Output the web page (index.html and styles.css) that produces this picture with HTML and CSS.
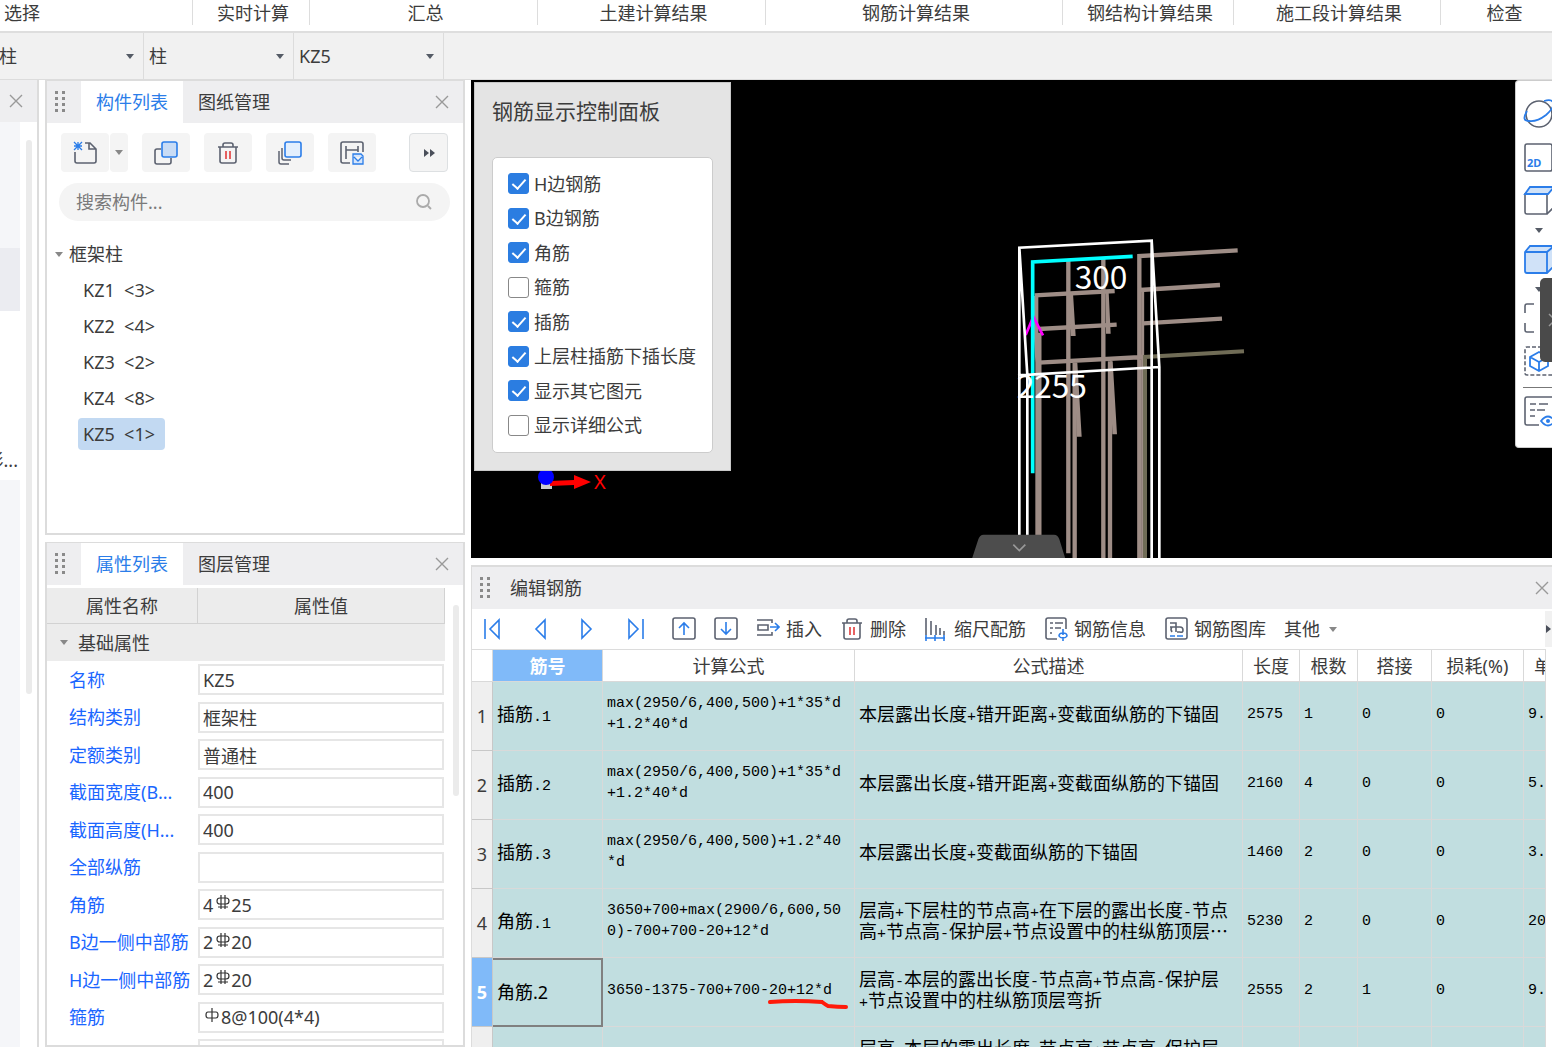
FILE: index.html
```
<!DOCTYPE html>
<html lang="zh-CN">
<head>
<meta charset="utf-8">
<meta name="viewport" content="width=device-width, initial-scale=1">
<title>编辑钢筋</title>
<link rel="stylesheet" href="styles.css">
</head>
<body>

<!-- shared icons -->
<svg class="defs" width="0" height="0">
  <symbol id="close" viewBox="0 0 14 14"><path d="M1 1l12 12M13 1L1 13" fill="none" stroke="#999" stroke-width="1.4"/></symbol>
  <symbol id="grip" viewBox="0 0 10 22"><path d="M0 0h3v3H0zM7 0h3v3H7zM0 6h3v3H0zM7 6h3v3H7zM0 12h3v3H0zM7 12h3v3H7zM0 18h3v3H0zM7 18h3v3H7z" fill="#8a8a8a"/></symbol>
  <symbol id="caret" viewBox="0 0 8 5"><path d="M0 0h8L4 5z" fill="currentColor"/></symbol>
  <symbol id="trash" viewBox="0 0 24 24"><path d="M2 6h20M4 6v14q0 2 2 2h12q2 0 2-2V6M7 6V4q0-2 2-2h6q2 0 2 2v2" fill="none" stroke="#5c6270" stroke-width="1.6"/><path d="M10 10v8M14 10v8" stroke="#e23b3b" stroke-width="1.6"/></symbol>
  <symbol id="hrb" viewBox="0 0 14 14"><path d="M5 0v14M9 0v14M2 12h10M4 3h6q3 0 3 3t-3 3H4q-3 0-3-3t3-3z" fill="none" stroke="#333" stroke-width="1.2"/></symbol>
  <symbol id="hpb" viewBox="0 0 14 14"><path d="M7 0v14M3 4h8q2 0 2 3t-2 3H3q-2 0-2-3t2-3z" fill="none" stroke="#333" stroke-width="1.2"/></symbol>
</svg>

<div class="app">
  <nav class="ribbon">
    <span class="first">选择</span>
    <span>实时计算</span>
    <span>汇总</span>
    <span>土建计算结果</span>
    <span>钢筋计算结果</span>
    <span>钢结构计算结果</span>
    <span>施工段计算结果</span>
    <span>检查</span>
  </nav>

  <div class="filters">
    <div class="pick"><select aria-label="分类"><option>柱</option></select><svg class="caret"><use href="#caret"/></svg></div>
    <div class="pick"><select aria-label="类型"><option>柱</option></select><svg class="caret"><use href="#caret"/></svg></div>
    <div class="pick"><select aria-label="构件"><option>KZ5</option></select><svg class="caret"><use href="#caret"/></svg></div>
  </div>

  <div class="work">
    <aside class="strip">
      <div class="dock-head"><button class="x" aria-label="关闭"><svg><use href="#close"/></svg></button></div>
      <div class="strip-body">
        <div class="strip-list">
          <div class="s1"></div>
          <div class="s2"></div>
          <div class="s3"><span>形...</span></div>
          <div class="s4"></div>
        </div>
        <div class="scroll strip-scroll"></div>
      </div>
    </aside>

    <div class="left">
      <section class="dock parts">
        <div class="dock-head">
          <svg class="grip"><use href="#grip"/></svg>
          <button class="tab on">构件列表</button>
          <button class="tab">图纸管理</button>
          <button class="x" aria-label="关闭"><svg><use href="#close"/></svg></button>
        </div>
        <div class="tools">
          <div class="split">
            <button class="tool" aria-label="新建"><svg viewBox="0 0 24 24"><path d="M2 11v9q0 2 2 2h17q2 0 2-2V8l-6-6h-5M16 2v6h7" fill="none" stroke="#5c6270" stroke-width="1.6"/><path d="M5 1v8M1 5h8M1 1l8 8M9 1L1 9" stroke="#2b7de9" stroke-width="1.3"/></svg></button>
            <button class="drop" aria-label="更多新建"><svg class="caret"><use href="#caret"/></svg></button>
          </div>
          <button class="tool" aria-label="复制"><svg viewBox="0 0 24 24"><path d="M7 8H3Q1 8 1 10v11q0 2 2 2h12q2 0 2-2v-4" fill="none" stroke="#5c6270" stroke-width="1.6"/><rect x="8" y="1" width="15" height="15" rx="2" fill="#c9dcf5" stroke="#2b7de9" stroke-width="1.6"/></svg></button>
          <button class="tool" aria-label="删除"><svg><use href="#trash"/></svg></button>
          <button class="tool" aria-label="层间复制"><svg viewBox="0 0 24 24"><path d="M4 7v10q0 2 2 2h7M1 10v11q0 2 2 2h8" fill="none" stroke="#5c6270" stroke-width="1.5"/><rect x="7" y="1" width="16" height="15" rx="2" fill="#e3effd" stroke="#2b7de9" stroke-width="1.6"/></svg></button>
          <button class="tool" aria-label="存档"><svg viewBox="0 0 24 24"><path d="M10 22H3q-2 0-2-2V3q0-2 2-2h18q2 0 2 2v8M6 5v13M6 9h12M18 5v6" fill="none" stroke="#5c6270" stroke-width="1.6"/><path d="M13 13h8l2 2v8H13zM14 16l4 4 4-4" fill="#d5e5fb" stroke="#2b7de9" stroke-width="1.3"/></svg></button>
          <button class="more" aria-label="更多"><svg viewBox="0 0 12 8"><path d="M1 0l5 4-5 4zM7 0l5 4-5 4z" fill="#4a4f5a"/></svg></button>
        </div>
        <div class="search">
          <input type="text" aria-label="搜索构件" placeholder="搜索构件...">
          <svg viewBox="0 0 16 16"><path d="M12 12l3 3M13 7A6 6 0 1 1 1 7a6 6 0 0 1 12 0z" fill="none" stroke="#aaa" stroke-width="1.8"/></svg>
        </div>
        <div class="tree">
          <div class="root"><svg class="caret"><use href="#caret"/></svg>框架柱</div>
          <ul>
            <li><span>KZ1  &lt;3&gt;</span></li>
            <li><span>KZ2  &lt;4&gt;</span></li>
            <li><span>KZ3  &lt;2&gt;</span></li>
            <li><span>KZ4  &lt;8&gt;</span></li>
            <li><span class="sel">KZ5  &lt;1&gt;</span></li>
          </ul>
        </div>
      </section>

      <section class="dock props">
        <div class="dock-head">
          <svg class="grip"><use href="#grip"/></svg>
          <button class="tab on">属性列表</button>
          <button class="tab">图层管理</button>
          <button class="x" aria-label="关闭"><svg><use href="#close"/></svg></button>
        </div>
        <div class="props-body">
          <div class="sheet">
            <div class="sheet-head"><span>属性名称</span><span>属性值</span></div>
            <div class="group"><svg class="caret"><use href="#caret"/></svg>基础属性</div>
            <div class="prop"><label for="p1">名称</label><div class="val"><input type="text" id="p1" value="KZ5"></div></div>
            <div class="prop"><label for="p2">结构类别</label><div class="val"><input type="text" id="p2" value="框架柱"></div></div>
            <div class="prop"><label for="p3">定额类别</label><div class="val"><input type="text" id="p3" value="普通柱"></div></div>
            <div class="prop"><label for="p4">截面宽度(B...</label><div class="val"><input type="text" id="p4" value="400"></div></div>
            <div class="prop"><label for="p5">截面高度(H...</label><div class="val"><input type="text" id="p5" value="400"></div></div>
            <div class="prop"><label for="p6">全部纵筋</label><div class="val"><input type="text" id="p6" value=""></div></div>
            <div class="prop"><label for="p7">角筋</label><div class="val"><input type="text" id="p7" value="4&emsp;25"><svg class="sym"><use href="#hrb"/></svg></div></div>
            <div class="prop"><label for="p8">B边一侧中部筋</label><div class="val"><input type="text" id="p8" value="2&emsp;20"><svg class="sym"><use href="#hrb"/></svg></div></div>
            <div class="prop"><label for="p9">H边一侧中部筋</label><div class="val"><input type="text" id="p9" value="2&emsp;20"><svg class="sym"><use href="#hrb"/></svg></div></div>
            <div class="prop"><label for="p10">箍筋</label><div class="val"><input type="text" id="p10" value="&emsp;8@100(4*4)"><svg class="sym lead"><use href="#hpb"/></svg></div></div>
            <div class="prop"><label for="p11">节点区箍筋</label><div class="val"><input type="text" id="p11" value=""></div></div>
          </div>
          <div class="scroll props-scroll"></div>
        </div>
      </section>
    </div>

    <main class="main">
      <section class="view">
        <!-- column model with rebars -->
        <svg class="model" viewBox="0 0 960 1014">
          <g fill="none" stroke="#9e8d86">
            <path d="M325 120V1000" stroke-width="13"/>
            <path d="M344 428V1014M430 115V1014M450 424V1014" stroke-width="13"/>
            <path d="M228 228v110l5 90v586" stroke-width="14"/>
            <path d="M239 338V1014" stroke-width="11"/>
            <path d="M538 1014V108L833 91M224 226L464 213M236 327L470 314M236 428L550 411M540 210L780 195M550 310L786 296" stroke-width="13"/>
            <path d="M548 210V1014" stroke-width="9"/>
          </g>
          <path d="M325 220h14l8 128h-15zM436 215h10l6 126h-14zM344 428h8l13 222h-15zM450 424h8l13 219h-14z" fill="#9e8d86"/>
          <path d="M555 1014V411L852 394" fill="none" stroke="#706c56" stroke-width="12"/>
          <path d="M218 760V126L518 109" fill="none" stroke="#00ffff" stroke-width="11"/>
          <path d="M197 345L220 290L249 346" fill="none" stroke="#f0f" stroke-width="8"/>
          <path d="M218 270V420" stroke="#00ffff" stroke-width="9"/>
          <path d="M178 1014V83L575 62V1014M178 83L202 465V1014M575 62L598 441V1014M174 466L598 441" fill="none" stroke="#fff" stroke-width="8"/>
          <text x="344" y="206" font-size="95">300</text>
          <text x="170" y="534" font-size="95">2255</text>
          <path d="M36 1016L55 958q4-14 16-14H282q12 0 16 14L316 1016z" fill="#4d4d4d"/>
          <path d="M160 974L178 992L196 974" fill="none" stroke="#999" stroke-width="5"/>
        </svg>

        <svg class="axis" viewBox="0 0 80 24">
          <path d="M3 12h11v7H3z" fill="#ccc"/>
          <path d="M12 11l24-1V5l17 7-17 7v-4l-24 1z" fill="#f00"/>
          <circle cx="8" cy="7" r="8" fill="#00f"/>
          <text x="56" y="19" font-size="20">X</text>
        </svg>

        <form class="control">
          <h2>钢筋显示控制面板</h2>
          <div class="checks">
            <label><input type="checkbox" checked>H边钢筋</label>
            <label><input type="checkbox" checked>B边钢筋</label>
            <label><input type="checkbox" checked>角筋</label>
            <label><input type="checkbox">箍筋</label>
            <label><input type="checkbox" checked>插筋</label>
            <label><input type="checkbox" checked>上层柱插筋下插长度</label>
            <label><input type="checkbox" checked>显示其它图元</label>
            <label><input type="checkbox">显示详细公式</label>
          </div>
        </form>

        <div class="viewbar">
          <button aria-label="动态观察"><svg viewBox="0 0 30 30"><circle cx="16" cy="15" r="13" fill="#fff" stroke="#5c6270" stroke-width="1.6"/><path d="M4 12q-6 10 2 10 8 1 17-6 9-8 7-13-2-3-9-1" fill="none" stroke="#2b7de9" stroke-width="1.8"/></svg></button>
          <button aria-label="二维"><svg viewBox="0 0 30 30"><rect x="2" y="2" width="27" height="27" rx="2" fill="#fff" stroke="#5c6270" stroke-width="1.6"/><text x="4" y="25" font-size="11">2D</text></svg></button>
          <button aria-label="俯视"><svg viewBox="0 0 30 30"><path d="M2 9h22v20H4q-2 0-2-2zM24 9l7-7M24 29l7-7" fill="#fff" stroke="#5c6270" stroke-width="1.6"/><path d="M2 9l5-7h24l-6 7z" fill="#d0e2f8" stroke="#2b7de9" stroke-width="1.8"/></svg></button>
          <svg class="caret"><use href="#caret"/></svg>
          <button aria-label="实体"><svg viewBox="0 0 30 30"><path d="M2 8l5-6h24v20l-7 7H4q-2 0-2-2z" fill="#d0e2f8" stroke="#2b7de9" stroke-width="1.8"/><path d="M2 8h22v21M24 8l7-6" fill="none" stroke="#2b7de9" stroke-width="1.8"/></svg></button>
          <svg class="caret"><use href="#caret"/></svg>
          <button aria-label="全屏"><svg viewBox="0 0 30 30"><path d="M11 1H4Q2 1 2 3v7M2 20v7q0 2 2 2h7" fill="none" stroke="#5c6270" stroke-width="1.6"/></svg></button>
          <button class="iso" aria-label="局部三维"><svg viewBox="0 0 30 30"><path d="M31 1H4Q2 1 2 3v24q0 2 2 2h27" fill="none" stroke="#5c6270" stroke-width="1.6" stroke-dasharray="4 2"/><path d="M16 6l9 5v9l-9 5-9-5v-9zM7 11l9 5 9-5M16 16v9" fill="none" stroke="#2b7de9" stroke-width="1.8"/></svg></button>
          <button class="last" aria-label="显示设置"><svg viewBox="0 0 30 30"><path d="M31 1H4Q2 1 2 3v24q0 2 2 2h12M7 8h6M16 8h9M7 14h5M14 14h8M7 20h5" fill="none" stroke="#5c6270" stroke-width="1.6"/><path d="M18 25q7-9 14 0-7 9-14 0z" fill="#fff" stroke="#2b7de9" stroke-width="1.8"/><circle cx="25" cy="25" r="2" fill="#2b7de9"/></svg></button>
        </div>
        <button class="handle" aria-label="收起"><svg viewBox="0 0 12 16"><path d="M9 2l6 6-6 6" fill="none" stroke="#999" stroke-width="1.5"/></svg></button>
      </section>

      <section class="rebar">
        <div class="dock-head">
          <svg class="grip"><use href="#grip"/></svg>
          <h2>编辑钢筋</h2>
          <button class="x" aria-label="关闭"><svg><use href="#close"/></svg></button>
        </div>
        <div class="bar">
          <div class="nav">
            <button aria-label="首行"><svg viewBox="0 0 24 24"><path d="M5 2v20M19 3v18L10 12z" class="blue"/></svg></button>
            <button aria-label="上一行"><svg viewBox="0 0 24 24"><path d="M17 3v18L8 12z" class="blue"/></svg></button>
            <button aria-label="下一行"><svg viewBox="0 0 24 24"><path d="M6 3v18l9-9z" class="blue"/></svg></button>
            <button aria-label="末行"><svg viewBox="0 0 24 24"><path d="M19 2v20M5 3v18l9-9z" class="blue"/></svg></button>
          </div>
          <button aria-label="上移"><svg viewBox="0 0 24 24"><rect x="1" y="1" width="22" height="21" rx="2" class="gray"/><path d="M12 18V6M7 11l5-5 5 5" class="blue"/></svg></button>
          <button aria-label="下移"><svg viewBox="0 0 24 24"><rect x="1" y="1" width="22" height="21" rx="2" class="gray"/><path d="M12 5v12M7 12l5 5 5-5" class="blue"/></svg></button>
          <button><svg viewBox="0 0 24 24"><path d="M1 3h15v3M1 18h15v-3M2 8h10v5H2z" class="gray"/><path d="M14 10h9M19 6l4 4-4 4" class="blue"/></svg>插入</button>
          <button><svg><use href="#trash"/></svg>删除</button>
          <button><svg viewBox="0 0 24 24"><path d="M2 1v17M7 4v14M12 8v10M16 11v7M20 14v4" class="gray"/><path d="M1 21h20M2 18v6M11 18v6M20 18v6" class="blue"/></svg>缩尺配筋</button>
          <button><svg viewBox="0 0 24 24"><path d="M13 22H4q-2 0-2-2V3q0-2 2-2h16q2 0 2 2v9M6 6h3M11 6h8M6 11h3M11 11h6M6 16h2" class="gray"/><path d="M19 12v6M15 19q0-3 4-3t4 3q-1 2-4 2t-4-2zM19 20v4" class="blue"/></svg>钢筋信息</button>
          <button><svg viewBox="0 0 24 24"><rect x="2" y="1" width="21" height="21" rx="2" class="gray"/><path d="M6 6h6v9M6 10h10q3 0 3 3t-3 2h-3M12 10H8q-2 2 0 5" class="gray"/><path d="M6 19h5M13 19h6" class="blue"/></svg>钢筋图库</button>
          <button class="other">其他<svg class="caret"><use href="#caret"/></svg></button>
          <button class="overflow" aria-label="更多"><svg viewBox="0 0 6 10"><path d="M1 1l5 4-5 4z" fill="#4a4f5a"/></svg></button>
        </div>
        <div class="grid">
          <table>
            <colgroup><col class="c-no"><col class="c-id"><col class="c-calc"><col><col class="c-len"><col class="c-cnt"><col class="c-lap"><col class="c-loss"><col class="c-wt"></colgroup>
            <thead>
              <tr><th></th><th class="on">筋号</th><th>计算公式</th><th>公式描述</th><th>长度</th><th>根数</th><th>搭接</th><th>损耗(%)</th><th class="cut">单重</th></tr>
            </thead>
            <tbody>
              <tr><th>1</th><td>插筋<span class="m">.1</span></td><td class="m">max(2950/6,400,500)+1*35*d<br>+1.2*40*d</td><td>本层露出长度<span class="m">+</span>错开距离<span class="m">+</span>变截面纵筋的下锚固</td><td class="m">2575</td><td class="m">1</td><td class="m">0</td><td class="m">0</td><td class="m">9.</td></tr>
              <tr><th>2</th><td>插筋<span class="m">.2</span></td><td class="m">max(2950/6,400,500)+1*35*d<br>+1.2*40*d</td><td>本层露出长度<span class="m">+</span>错开距离<span class="m">+</span>变截面纵筋的下锚固</td><td class="m">2160</td><td class="m">4</td><td class="m">0</td><td class="m">0</td><td class="m">5.</td></tr>
              <tr><th>3</th><td>插筋<span class="m">.3</span></td><td class="m">max(2950/6,400,500)+1.2*40<br>*d</td><td>本层露出长度<span class="m">+</span>变截面纵筋的下锚固</td><td class="m">1460</td><td class="m">2</td><td class="m">0</td><td class="m">0</td><td class="m">3.</td></tr>
              <tr><th>4</th><td>角筋<span class="m">.1</span></td><td class="m">3650+700+max(2900/6,600,50<br>0)-700+700-20+12*d</td><td>层高<span class="m">+</span>下层柱的节点高<span class="m">+</span>在下层的露出长度<span class="m">-</span>节点<br>高<span class="m">+</span>节点高<span class="m">-</span>保护层<span class="m">+</span>节点设置中的柱纵筋顶层<span class="cjk">…</span></td><td class="m">5230</td><td class="m">2</td><td class="m">0</td><td class="m">0</td><td class="m">20</td></tr>
              <tr class="cur"><th>5</th><td class="edit">角筋.2</td><td class="m mark">3650-1375-700+700-20+12*d<svg viewBox="0 0 80 12"><path d="M2 4q25-2 52 0 4 3 6 4 10 1 18 1" fill="none" stroke="#ff1a0a" stroke-width="4" stroke-linecap="round"/></svg></td><td>层高<span class="m">-</span>本层的露出长度<span class="m">-</span>节点高<span class="m">+</span>节点高<span class="m">-</span>保护层<br><span class="m">+</span>节点设置中的柱纵筋顶层弯折</td><td class="m">2555</td><td class="m">2</td><td class="m">1</td><td class="m">0</td><td class="m">9.</td></tr>
              <tr><th></th><td></td><td></td><td>层高<span class="m">-</span>本层的露出长度<span class="m">-</span>节点高<span class="m">+</span>节点高<span class="m">-</span>保护层<br><span class="m">+</span>节点设置中的柱纵筋顶层弯折</td><td></td><td></td><td></td><td></td><td></td></tr>
            </tbody>
          </table>
        </div>
      </section>
    </main>
  </div>
</div>

</body>
</html>
```
FILE: styles.css
```
* {box-sizing: border-box;}

body {
  margin: 0;
  font-family: "Noto Sans", "Noto Sans CJK SC", sans-serif;
  font-size: 18px;
  line-height: 24px;
  color: #3c3c3c;
  background: #fff;
  overflow: hidden;
}

button, input, select {
  font: inherit;
  color: inherit;
}

button {
  border: 0;
  padding: 0;
  background: none;
  cursor: pointer;
}

h2 {
  margin: 0;
  font-size: 18px;
  font-weight: normal;
}

svg {display: block; flex: none;}
.defs {position: absolute;}
.caret {width: 8px; height: 5px; color: #555b66;}
.grip {width: 10px; height: 22px;}

.app {
  display: flex;
  flex-direction: column;
  height: 100vh;
}

/* ribbon */
.ribbon {
  display: grid;
  grid-template-columns: 193px 117px 228px 228px 297px 171px 207px minmax(124px, 1fr);
  height: 33px;
  flex: none;
  border-bottom: 2px solid #dedede;
}

.ribbon span {
  height: 25px;
  padding: 1px 0 0 4px;
  border-right: 1px solid #ddd;
  text-align: center;
}
.ribbon .first {text-align: left;}

/* filters */
.filters {
  display: flex;
  flex: none;
  height: 47px;
  margin-left: -6px;
  background: #f1f1f1;
  border-bottom: 1px solid #dcdcdc;
}

.pick {
  display: flex;
  align-items: center;
  width: 150px;
  padding-right: 9px;
  border-right: 1px solid #dcdcdc;
}

.pick select {
  flex: 1;
  height: 46px;
  padding: 0 0 0 5px;
  border: 0;
  background: none;
  appearance: none;
}

/* docks */
.work {
  display: flex;
  flex: 1;
  min-height: 0;
}

.dock-head {
  display: flex;
  align-items: center;
  flex: none;
  height: 42px;
  background: #eeeef0;
}

.dock-head .grip {margin: 0 16px 0 8px;}
.dock-head .x {margin-left: auto; padding: 4px 14px;}
.x svg {width: 14px; height: 14px;}

.tab {
  height: 42px;
  padding: 0 15px;
}
.tab.on {color: #2b7de9; background: #fff;}

.scroll {
  width: 6px;
  border-radius: 3px;
  background: #ebebeb;
}

/* cut off strip on the left */
.strip {
  display: flex;
  flex-direction: column;
  width: 39px;
  flex: none;
  border-right: 2px solid #dcdcdc;
}
.strip .dock-head .x {margin: 0; padding: 4px 9px;}
.strip-body {display: flex; flex: 1;}
.strip-list {
  display: flex;
  flex-direction: column;
  width: 20px;
}
.s1 {height: 126px; background: #f5f6f9;}
.s2 {height: 63px; background: #ebecf1;}
.s3 {
  display: flex;
  justify-content: flex-end;
  align-items: flex-end;
  height: 169px;
  padding: 0 2px 8px 0;
  overflow: hidden;
}
.s4 {flex: 1; background: #f5f6f9;}
.strip-scroll {height: 554px; margin: 18px 0 0 6px;}

.left {
  display: flex;
  flex-direction: column;
  gap: 7px;
  width: 420px;
  flex: none;
  margin-left: 6px;
}

.dock {
  border: 2px solid #dcdcdc;
  border-top-width: 1px;
}

.parts {height: 455px;}

.tools {
  display: flex;
  gap: 14px;
  padding: 10px 15px 0 14px;
}

.tool, .drop, .more {
  display: flex;
  align-items: center;
  justify-content: center;
  width: 48px;
  height: 39px;
  border-radius: 4px;
  background: #f4f4f4;
}
.tool svg {width: 24px; height: 24px;}
.split {display: flex; gap: 1px;}
.drop {width: 18px;}
.drop .caret {color: #888;}
.more {
  width: 39px;
  margin-left: auto;
  border: 1px solid #dde0e2;
}
.more svg {width: 12px; height: 8px;}

.search {
  display: flex;
  align-items: center;
  height: 38px;
  margin: 11px 13px 0 12px;
  padding: 0 18px 0 17px;
  border-radius: 19px;
  background: #f4f4f4;
}
.search input {
  flex: 1;
  min-width: 0;
  padding: 0;
  border: 0;
  background: none;
  outline: none;
}
.search input::placeholder {color: #7a7a7a; opacity: 1;}
.search svg {width: 16px; height: 16px;}

.tree {padding: 15px 8px 0;}
.root {
  display: flex;
  align-items: center;
  gap: 6px;
  height: 36px;
}
.root .caret {color: #888;}
.tree ul {
  list-style: none;
  margin: 0;
  padding: 0 0 0 23px;
}
.tree li {
  display: flex;
  align-items: center;
  height: 36px;
}
.tree li span {
  padding: 4px 10px 4px 5px;
  border-radius: 4px;
  white-space: pre;
}
.tree .sel {background: #c2d9f2;}

/* properties */
.props {
  flex: 1;
  min-height: 0;
  overflow: hidden;
}
.props-body {display: flex; padding-top: 3px;}
.sheet {width: 398px;}

.sheet-head {
  display: grid;
  grid-template-columns: 151px 1fr;
  height: 36px;
  background: #ececec;
  border-bottom: 1px solid #d2d2d2;
  line-height: 36px;
  text-align: center;
}
.sheet-head span {border-right: 1px solid #d2d2d2;}

.group {
  display: flex;
  align-items: center;
  gap: 10px;
  height: 37px;
  padding-left: 13px;
  background: #ececec;
}
.group .caret {color: #888;}

.prop {
  display: grid;
  grid-template-columns: 129px 246px;
  align-items: center;
  height: 37px;
  padding-left: 22px;
  color: #1a66ff;
  white-space: nowrap;
}
.prop:nth-child(even) {height: 38px;}
.val {position: relative; color: #3c3c3c;}
.val input {
  display: block;
  width: 100%;
  height: 31px;
  padding: 0 3px;
  border: 2px solid #e6e6e6;
  background: #fff;
}
.sym {
  position: absolute;
  left: 18px;
  top: 6px;
  width: 14px;
  height: 14px;
}
.sym.lead {left: 7px;}
.props-scroll {height: 191px; margin: 17px 0 0 8px;}

/* 3d view */
.main {
  display: flex;
  flex-direction: column;
  gap: 7px;
  flex: 1;
  min-width: 0;
  margin-left: 6px;
}

.view {
  position: relative;
  flex: none;
  height: 478px;
  background: #000;
  overflow: hidden;
}

.model {
  position: absolute;
  left: 489px;
  bottom: 0;
  width: 320px;
  height: 338px;
}
.model text {fill: #fff; font-family: "Noto Sans CJK SC", sans-serif;}

.axis {
  position: absolute;
  left: 67px;
  top: 390px;
  width: 80px;
  height: 24px;
}
.axis text {fill: #f00;}

.control {
  position: absolute;
  left: 3px;
  top: 2px;
  width: 257px;
  padding: 16px 17px 17px;
  background: #e4e4e4;
  border: 1px solid #c8c8c8;
}
.control h2 {
  margin-bottom: 34px;
  font-size: 21px;
}
.checks {
  padding: 8px 15px 10px;
  background: #fff;
  border: 1px solid #ccc;
  border-radius: 5px;
}
.checks label {
  display: flex;
  align-items: center;
  gap: 5px;
  height: 34px;
  white-space: nowrap;
}
.checks label:nth-child(odd) {height: 35px;}
.checks input {
  width: 21px;
  height: 21px;
  margin: 0;
  flex: none;
  appearance: none;
  border: 1px solid #888;
  border-radius: 3px;
  background: #fff;
}
.checks input:checked {
  border-color: #2b7de1;
  background: #2b7de1;
}
.checks input:checked::before {
  content: "";
  display: block;
  width: 6px;
  height: 11px;
  margin: 2px 6px;
  border: solid #fff;
  border-width: 0 2px 2px 0;
  transform: rotate(42deg);
}

.viewbar {
  position: absolute;
  top: 0;
  right: 0;
  width: 37px;
  height: 368px;
  padding: 18px 0 0 7px;
  overflow: hidden;
  background: #fff;
  border: solid #ccc;
  border-width: 1px 0 1px 1px;
  border-radius: 4px 0 0 4px;
}
.viewbar button {
  display: block;
  width: 30px;
  margin-bottom: 13px;
}
.viewbar button svg {width: 30px; height: 30px; overflow: visible;}
.viewbar .caret {margin: 0 0 11px 12px;}
.viewbar .iso {margin-bottom: 11px;}
.viewbar .last {
  padding-top: 8px;
  border-top: 1px solid #777;
}
.viewbar text {fill: #2b7de9; font-weight: bold;}

.handle {
  position: absolute;
  right: 0;
  top: 198px;
  width: 12px;
  height: 84px;
  border-radius: 5px 0 0 5px;
  background: #4a4a4a;
}
.handle svg {width: 12px; height: 16px;}

/* rebar editor */
.rebar {
  flex: 1;
  min-height: 0;
  overflow: hidden;
  border-top: 2px solid #dcdcdc;
  border-left: 1px solid #dcdcdc;
}
.rebar .dock-head .grip {margin-right: 20px;}
.rebar .dock-head .x {padding: 4px 3px;}

.bar {
  display: flex;
  align-items: center;
  gap: 18px;
  height: 40px;
  padding-left: 8px;
}
.bar .nav {display: flex; gap: 24px; margin-right: 6px;}
.bar button {
  display: flex;
  align-items: center;
  gap: 6px;
  white-space: nowrap;
}
.bar svg {width: 24px; height: 24px;}
.bar .caret {width: 8px; height: 5px; color: #888;}
.bar .other {gap: 9px;}
.bar .overflow {
  width: 7px;
  height: 36px;
  margin-left: auto;
  background: #f1f1f1;
}
.bar .overflow svg {width: 6px; height: 10px;}
.blue {fill: none; stroke: #2b7de9; stroke-width: 1.6;}
.gray {fill: none; stroke: #5c6270; stroke-width: 1.6;}

.grid {
  margin-right: 6px;
  overflow: hidden;
  border-top: 1px solid #dcdcdc;
}
.grid table {
  width: 100%;
  table-layout: fixed;
  border-collapse: separate;
  border-spacing: 0;
}
.c-no {width: 21px;}
.c-id {width: 110px;}
.c-calc {width: 252px;}
.c-len {width: 57px;}
.c-cnt {width: 58px;}
.c-lap {width: 74px;}
.c-loss {width: 92px;}
.c-wt {width: 22px;}

.grid th, .grid td {
  padding: 0;
  border: solid #d9d9d9;
  border-width: 0 1px 1px 0;
  font-weight: normal;
  white-space: nowrap;
  overflow: hidden;
}
.grid thead th {height: 32px;}
.grid thead .on {
  color: #fff;
  font-weight: bold;
  background: #80baf9;
}
.grid thead .cut {padding-left: 10px; text-align: left;}
.grid tbody th {
  background: #efefef;
  border-color: #c8c8c8;
}
.grid td {
  height: 69px;
  padding: 0 0 4px 4px;
  background: #c1dee0;
  color: #000;
  line-height: 21px;
}
.m {
  font-family: "Liberation Mono", monospace;
  font-size: 15px;
}
td span.m {line-height: 0;}
.cjk {font-family: "Noto Sans CJK SC", sans-serif; line-height: 0;}
.grid .cur th {
  color: #fff;
  font-weight: bold;
  background: #80baf9;
}
.grid .edit {
  padding-bottom: 0;
  border: solid #808080;
  border-width: 2px 2px 2px 0;
}
.mark {position: relative;}
.mark svg {
  position: absolute;
  left: 165px;
  top: 40px;
  width: 80px;
  height: 12px;
}
```
